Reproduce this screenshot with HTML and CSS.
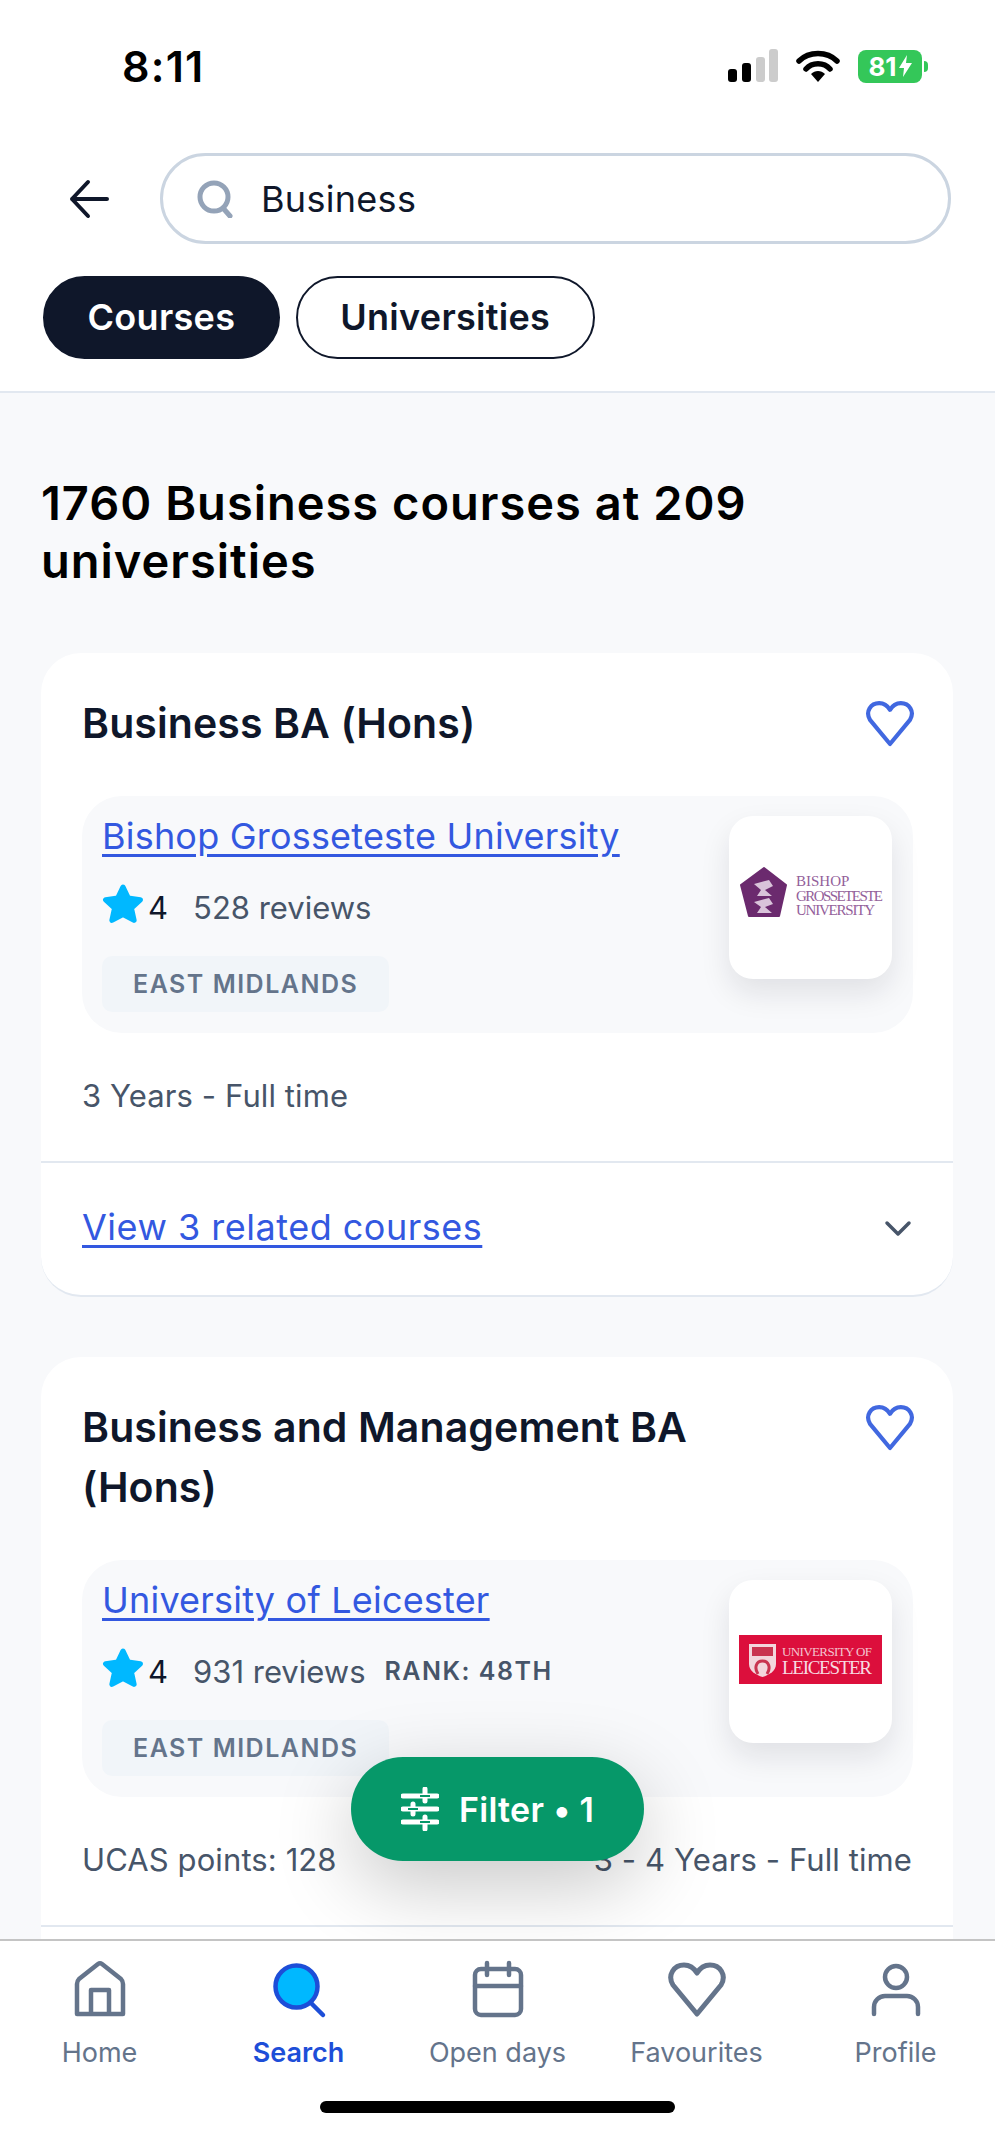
FILE: index.html
```html
<!DOCTYPE html>
<html>
<head>
	<meta charset="utf-8">
	<title>Search results</title>
	<link rel="stylesheet" href="styles.css">
</head>
<body>
	<svg class="defs" width="0" height="0">
		<symbol id="heart" viewBox="0 0 60 60">
			<path d="M30 54 L6 25 C0 15 7 5 17 5 C23 5 27 8 30 13 C33 8 37 5 43 5 C53 5 60 15 54 25 Z" fill="none" stroke-width="5" stroke-linejoin="round"/>
		</symbol>
		<symbol id="star" viewBox="0 0 40 38">
			<path d="M20 3 L25 13.5 L36.5 15 L28 23 L30.5 34.5 L20 29 L9.5 34.5 L12 23 L3.500 15 L15 13.5 Z" stroke-width="5" stroke-linejoin="round"/>
		</symbol>
	</svg>

	<header class="topBar">
		<div class="statusBar">
			<span class="clock">8:11</span>
			<div class="statusIcons">
				<svg class="signal" width="52" height="34" viewBox="0 0 52 34">
					<rect x="0" y="20" width="9" height="13" rx="3" fill="#000"/>
					<rect x="14" y="14" width="9" height="19" rx="3" fill="#000"/>
					<rect x="28" y="8" width="9" height="25" rx="3" fill="#ccc"/>
					<rect x="41" y="0" width="9" height="33" rx="3" fill="#ccc"/>
				</svg>
				<svg class="wifi" width="44" height="34" viewBox="0 0 44 34">
					<path d="M3 12 C13 2 31 2 41 12" fill="none" stroke="#000" stroke-width="5.5" stroke-linecap="round"/>
					<path d="M10 20 C16 13 28 13 34 20" fill="none" stroke="#000" stroke-width="5.5" stroke-linecap="round"/>
					<path d="M15 25 C19 21 25 21 29 25 L22 33 Z" fill="#000"/>
				</svg>
				<div class="battery">
					<span class="batteryFill">81<svg width="13" height="22" viewBox="0 0 13 22"><path d="M8 0 L0 13 H5 L4 22 L13 8 H7 Z" fill="#fff"/></svg></span>
					<span class="batteryTip"></span>
				</div>
			</div>
		</div>

		<div class="searchRow">
			<svg class="backArrow" width="40" height="40" viewBox="0 0 40 40">
				<path d="M38 20 H3 M19 3 L3 20 L19 37" fill="none" stroke="#0f172a" stroke-width="4" stroke-linecap="round" stroke-linejoin="round"/>
			</svg>
			<div class="searchBox">
				<svg width="36" height="38" viewBox="0 0 36 38">
					<circle cx="17" cy="17" r="14" fill="none" stroke="#94a3b8" stroke-width="5"/>
					<path d="M26 28 L33 36" stroke="#94a3b8" stroke-width="5" stroke-linecap="round"/>
				</svg>
				<span class="searchText">Business</span>
			</div>
		</div>

		<div class="tabs">
			<span class="tab tabActive">Courses</span>
			<span class="tab">Universities</span>
		</div>
	</header>

	<main class="results">
		<h1 class="resultsTitle">1760 Business courses at 209 universities</h1>

		<section class="courseCard">
			<div class="courseHead">
				<h2>Business BA (Hons)</h2>
				<svg class="favIcon"><use href="#heart"/></svg>
			</div>
			<div class="uniPanel">
				<div class="uniInfo">
					<a class="uniLink" href="#">Bishop Grosseteste University</a>
					<div class="ratingRow">
						<svg class="star"><use href="#star"/></svg>
						<span class="ratingValue">4</span>
						<span class="reviewCount">528 reviews</span>
					</div>
					<span class="regionTag">EAST MIDLANDS</span>
				</div>
				<div class="uniLogo">
					<svg width="163" height="163" viewBox="0 0 163 163">
						<path d="M35 52 L57 69 L50 100 L20 100 L12 69 Z" fill="#6b2a6e" stroke="#6b2a6e" stroke-width="2" stroke-linejoin="round"/>
						<path d="M25 68 L40 64 L44 70 L36 74 L43 80 L28 80 L32 74 Z M25 86 L40 82 L44 88 L36 91 L43 97 L28 97 L32 91 Z" fill="#d9c3da"/>
						<text class="logoSerif" x="67" y="70">BISHOP</text>
						<text class="logoSerif" x="67" y="85" textLength="87">GROSSETESTE</text>
						<text class="logoSerif" x="67" y="99" textLength="79">UNIVERSITY</text>
					</svg>
				</div>
			</div>
			<div class="courseMeta"><span>3 Years - Full time</span></div>
			<div class="relatedRow">
				<a class="uniLink relatedLink" href="#">View 3 related courses</a>
				<svg class="chevron" width="28" height="20" viewBox="0 0 28 20">
					<path d="M3 4 L14 15 L25 4" fill="none" stroke="#475569" stroke-width="3.500" stroke-linecap="round" stroke-linejoin="round"/>
				</svg>
			</div>
		</section>

		<section class="courseCard">
			<div class="courseHead">
				<h2>Business and Management BA (Hons)</h2>
				<svg class="favIcon"><use href="#heart"/></svg>
			</div>
			<div class="uniPanel">
				<div class="uniInfo">
					<a class="uniLink" href="#">University of Leicester</a>
					<div class="ratingRow">
						<svg class="star"><use href="#star"/></svg>
						<span class="ratingValue">4</span>
						<span class="reviewCount">931 reviews</span>
						<span class="rank">RANK: 48TH</span>
					</div>
					<span class="regionTag">EAST MIDLANDS</span>
				</div>
				<div class="uniLogo">
					<svg width="163" height="163" viewBox="0 0 163 163">
						<rect x="10" y="55" width="143" height="49" fill="#dc0f3c"/>
						<path d="M20 64 H47 V84 C47 91 40 95 33.500 97 C27 95 20 91 20 84 Z" fill="#f3d6dc"/>
						<path d="M23 67 H44 V76 H23 Z" fill="#c9344f"/>
						<path d="M29 94 C25 88 27 81 33.500 81 C40 81 42 88 38 94" fill="none" stroke="#c9344f" stroke-width="3"/>
						<text class="logoUni" x="53" y="76" textLength="90">UNIVERSITY OF</text>
						<text class="logoLei" x="53" y="94" textLength="90">LEICESTER</text>
					</svg>
				</div>
			</div>
			<div class="courseMeta">
				<span>UCAS points: 128</span>
				<span>3 - 4 Years - Full time</span>
			</div>
			<div class="relatedRow"></div>
		</section>

		<button class="filterBtn">
			<svg width="38" height="44" viewBox="0 0 38 44">
				<path d="M2 9 H36 M2 22 H36 M2 35 H36" stroke="#fff" stroke-width="5" stroke-linecap="round"/>
				<path d="M24 2 V14 M12 17 V27 M24 30 V42" stroke="#fff" stroke-width="5" stroke-linecap="round"/>
				<path d="M19 9 H29 M7 22 H17 M19 35 H29" stroke="#069869" stroke-width="2" fill="none"/>
			</svg>
			Filter • 1
		</button>
	</main>

	<nav class="bottomNav">
		<div class="navItems">
			<div class="navItem">
				<svg width="60" height="60" viewBox="0 0 60 60">
					<path d="M7 54 V24 Q7 21 9 19 L28 4 Q30 2.500 32 4 L51 19 Q53 21 53 24 V54 Z M21 54 V30 H39 V54" fill="none" stroke="#64748b" stroke-width="4.500" stroke-linejoin="round"/>
				</svg>
				<span>Home</span>
			</div>
			<div class="navItem navActive">
				<svg width="60" height="60" viewBox="0 0 60 60">
					<circle cx="27.500" cy="26.500" r="21" fill="#00b8ff" stroke="#1d4ed8" stroke-width="4.500"/>
					<path d="M42 43 L54 55" stroke="#1d4ed8" stroke-width="4.500" stroke-linecap="round"/>
				</svg>
				<span>Search</span>
			</div>
			<div class="navItem">
				<svg width="60" height="60" viewBox="0 0 60 60">
					<rect x="7" y="9" width="46" height="46" rx="6" fill="none" stroke="#64748b" stroke-width="4.500"/>
					<path d="M7 26 H53 M19 3 V15 M41 3 V15" stroke="#64748b" stroke-width="4.500" stroke-linecap="round"/>
				</svg>
				<span>Open days</span>
			</div>
			<div class="navItem">
				<svg class="navHeart" width="60" height="60"><use href="#heart"/></svg>
				<span>Favourites</span>
			</div>
			<div class="navItem">
				<svg width="60" height="60" viewBox="0 0 60 60">
					<circle cx="30" cy="17" r="11" fill="none" stroke="#64748b" stroke-width="4.500"/>
					<path d="M8 54 V47 A11 11 0 0 1 19 36 H41 A11 11 0 0 1 52 47 V54" fill="none" stroke="#64748b" stroke-width="4.500" stroke-linecap="round"/>
				</svg>
				<span>Profile</span>
			</div>
		</div>
		<div class="homeBar"></div>
	</nav>
</body>
</html>
```

FILE: styles.css
```css
* {
	box-sizing: border-box;
}

html, body {
	margin: 0;
	height: 100%;
}

body {
	display: flex;
	flex-direction: column;
	height: 2152px;
	overflow: hidden;
	background: #fff;
	color: #0f172a;
	font-family: Inter, "Liberation Sans", sans-serif;
}

.defs {
	position: absolute;
}

/* Top bar */
.topBar {
	flex: none;
	background: #fff;
	border-bottom: 2px solid #e2e8f0;
	padding-bottom: 32px;
}

.statusBar {
	display: flex;
	justify-content: space-between;
	align-items: center;
	height: 132px;
	padding: 0 67px 0 122px;
}

.clock {
	font-size: 43px;
	font-weight: 600;
	letter-spacing: 1.2px;
	color: #000;
}

.statusIcons {
	display: flex;
	align-items: center;
	gap: 16px;
}

.battery {
	display: flex;
	align-items: center;
	gap: 2px;
	margin-left: 2px;
}

.batteryFill {
	display: flex;
	align-items: center;
	justify-content: center;
	gap: 2px;
	width: 64px;
	height: 33px;
	border-radius: 8px;
	background: #34c759;
	color: #fff;
	font-size: 26px;
	font-weight: 700;
}

.batteryTip {
	width: 4px;
	height: 11px;
	border-radius: 0 4px 4px 0;
	background: #34c759;
}

.searchRow {
	display: flex;
	align-items: center;
	gap: 51px;
	margin-top: 21px;
	padding: 0 44px 0 69px;
}

.searchBox {
	flex: 1;
	display: flex;
	align-items: center;
	gap: 28px;
	height: 91px;
	padding-left: 34px;
	border: 3px solid #cbd5e1;
	border-radius: 46px;
}

.searchText {
	font-size: 36px;
	letter-spacing: 0.3px;
	color: #0f172a;
}

.tabs {
	display: flex;
	gap: 16px;
	margin-top: 32px;
	padding-left: 43px;
}

.tab {
	display: flex;
	align-items: center;
	height: 83px;
	padding: 0 42.500px 2px;
	border: 2.500px solid #0f172a;
	border-radius: 42px;
	font-size: 36px;
	font-weight: 600;
	letter-spacing: 0.3px;
}

.tabActive {
	background: #0f172a;
	color: #fff;
}

/* Results */
.results {
	position: relative;
	flex: 1;
	min-height: 0;
	overflow: hidden;
	padding: 81px 42px 0 41px;
	background: #f8f9fb;
}

.resultsTitle {
	margin: 0 0 63px;
	font-size: 47px;
	line-height: 58px;
	font-weight: 600;
	letter-spacing: 1px;
	color: #000;
}

.courseCard {
	margin-bottom: 60px;
	padding-top: 40px;
	border-bottom: 2px solid #e2e8f0;
	border-radius: 40px;
	background: #fff;
}

.courseHead {
	display: flex;
	justify-content: space-between;
	padding: 0 38px 0 41px;
}

.courseHead h2 {
	margin: 0;
	width: 700px;
	font-size: 41px;
	line-height: 60px;
	font-weight: 600;
	letter-spacing: 0.1px;
}

.favIcon {
	flex: none;
	width: 50px;
	height: 50px;
	margin-top: 6px;
	stroke: #4168e0;
}

.uniPanel {
	display: flex;
	justify-content: space-between;
	margin: 43px 40px 0 41px;
	padding: 20px 21px 21px 20px;
	border-radius: 40px;
	background: #f8f9fb;
}

.uniLink {
	font-size: 36px;
	line-height: 40px;
	letter-spacing: 0.2px;
	color: #3358e0;
	text-underline-offset: 5px;
}

.relatedLink {
	letter-spacing: 0.5px;
}

.chevron {
	margin-top: 4px;
}

.uniInfo {
	display: flex;
	flex-direction: column;
	align-items: flex-start;
}

.ratingRow {
	display: flex;
	align-items: center;
	height: 40px;
	margin-top: 31px;
	font-size: 31px;
	color: #475569;
}

.star {
	width: 42px;
	height: 40px;
	margin-top: -6px;
	fill: #00b8ff;
	stroke: #00b8ff;
}

.ratingValue {
	margin: 0 25px 0 4px;
	color: #0f172a;
}

.rank {
	margin-left: 19px;
	font-size: 25px;
	font-weight: 600;
	letter-spacing: 1.500px;
}

.regionTag {
	display: flex;
	align-items: center;
	height: 56px;
	margin-top: 29px;
	padding: 0 31px;
	border-radius: 10px;
	background: #f1f5f9;
	color: #64748b;
	font-size: 25px;
	font-weight: 600;
	letter-spacing: 1.500px;
}

.uniLogo {
	flex: none;
	width: 163px;
	height: 163px;
	border-radius: 24px;
	background: #fff;
	box-shadow: 0 14px 30px rgba(15, 23, 42, 0.1);
}

.logoSerif {
	font-family: "Liberation Serif", serif;
	font-size: 15px;
	fill: #93609a;
}

.logoUni {
	font-family: "Liberation Serif", serif;
	font-size: 13px;
	fill: #f3c4cf;
}

.logoLei {
	font-family: "Liberation Serif", serif;
	font-size: 19px;
	fill: #f7dbe1;
}

.courseMeta {
	display: flex;
	justify-content: space-between;
	margin-top: 43px;
	padding: 0 41px;
	font-size: 31px;
	line-height: 40px;
	letter-spacing: 0.1px;
	color: #475569;
}

.relatedRow {
	display: flex;
	justify-content: space-between;
	align-items: center;
	margin-top: 45px;
	padding: 44px 41px 48px;
	border-top: 2px solid #e2e8f0;
}

.filterBtn {
	position: absolute;
	left: 351px;
	bottom: 78px;
	display: flex;
	align-items: center;
	justify-content: center;
	gap: 20px;
	width: 293px;
	height: 104px;
	border: 0;
	border-radius: 52px;
	background: #069869;
	color: #fff;
	font-family: inherit;
	font-size: 34px;
	font-weight: 600;
	letter-spacing: 0.3px;
	box-shadow: 0 24px 80px rgba(0, 0, 0, 0.22);
}

/* Bottom nav */
.bottomNav {
	position: relative;
	flex: none;
	height: 213px;
	border-top: 2px solid #c4c4c4;
	background: #fff;
}

.navItems {
	display: grid;
	grid-template-columns: repeat(5, 199px);
	padding-top: 19px;
}

.navItem {
	display: flex;
	flex-direction: column;
	align-items: center;
	gap: 16px;
	color: #64748b;
	font-size: 27px;
}

.navActive {
	color: #1d4ed8;
	font-weight: 600;
}

.navHeart {
	stroke: #64748b;
}

.homeBar {
	width: 355px;
	height: 12px;
	margin: 32px auto 0;
	border-radius: 6px;
	background: #000;
}
```
